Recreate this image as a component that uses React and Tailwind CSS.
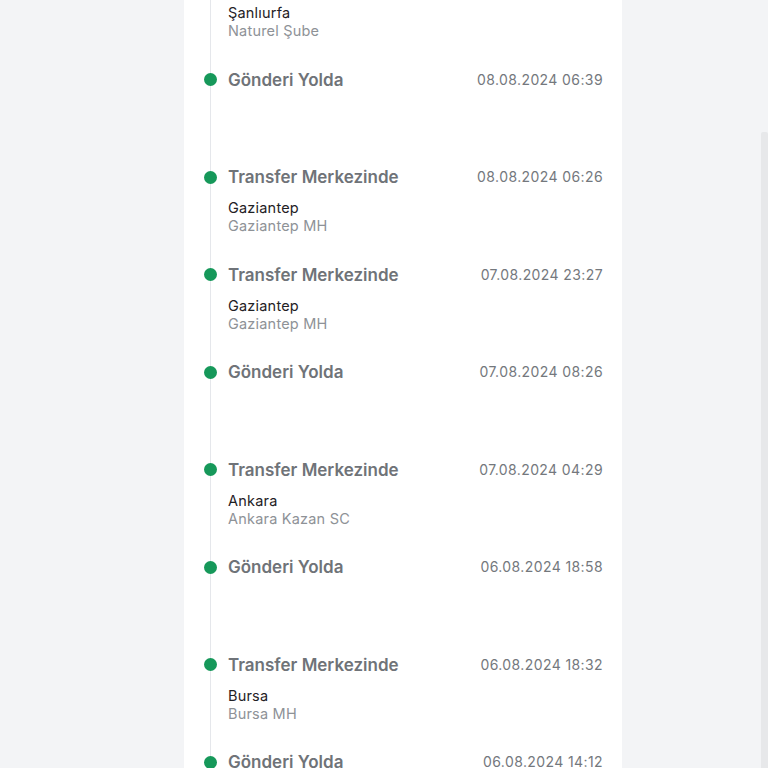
import React from "react";

const items = [
  { title: "Transfer Merkezinde", date: "08.08.2024 07:10", city: "Şanlıurfa", branch: "Naturel Şube" },
  { title: "Gönderi Yolda", date: "08.08.2024 06:39" },
  { title: "Transfer Merkezinde", date: "08.08.2024 06:26", city: "Gaziantep", branch: "Gaziantep MH" },
  { title: "Transfer Merkezinde", date: "07.08.2024 23:27", city: "Gaziantep", branch: "Gaziantep MH" },
  { title: "Gönderi Yolda", date: "07.08.2024 08:26" },
  { title: "Transfer Merkezinde", date: "07.08.2024 04:29", city: "Ankara", branch: "Ankara Kazan SC" },
  { title: "Gönderi Yolda", date: "06.08.2024 18:58" },
  { title: "Transfer Merkezinde", date: "06.08.2024 18:32", city: "Bursa", branch: "Bursa MH" },
  { title: "Gönderi Yolda", date: "06.08.2024 14:12" },
];

export default function App() {
  return (
    <div
      className="w-[768px] h-[768px] overflow-hidden bg-[#f3f4f6] flex"
      style={{ fontFamily: "Inter, 'Noto Sans', sans-serif" }}
    >
      <div className="w-[184px] shrink-0" />
      <div className="w-[438px] shrink-0 bg-white mt-[-29px] pl-[20px] pr-[19px] relative">
        <div className="absolute left-[26px] top-0 bottom-0 w-px bg-[#e5e7eb]" />
        {items.map((it, i) => (
          <div key={i} className="h-[97.5px] flex relative">
            <div className="w-[13px] h-[22px] flex items-center shrink-0">
              <div className="w-[13px] h-[13px] rounded-full bg-[#16985a]" />
            </div>
            <div className="flex-1 pl-[11px]">
              <div className="h-[22px] flex items-center justify-between">
                <span className="text-[17px] font-semibold text-[#6f7378] leading-[22px]">{it.title}</span>
                <span className="text-[14px] text-[#74787d] leading-[22px] tracking-[0.4px]">{it.date}</span>
              </div>
              {it.city && (
                <div className="mt-[11px]">
                  <div className="text-[14.5px] leading-[18px] text-[#1f2125] tracking-[0.2px]">{it.city}</div>
                  <div className="text-[14.5px] leading-[18px] text-[#8e9297] tracking-[0.2px]">{it.branch}</div>
                </div>
              )}
            </div>
          </div>
        ))}
      </div>
      <div className="flex-1 flex justify-end">
        <div className="w-[7px] mt-[132px] bg-[#e7e8ea] rounded-t-[2px]" />
      </div>
    </div>
  );
}
